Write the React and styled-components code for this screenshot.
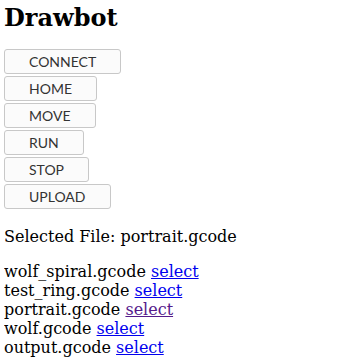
import React from 'react'
import styled, { createGlobalStyle } from 'styled-components'

const GlobalStyle = createGlobalStyle`
  body {
    margin: 4px;
    font-family: "DejaVu Serif", serif;
    font-size: 16px;
    background: #ffffff;
  }
`

const Title = styled.h1`
  font-family: "DejaVu Serif", serif;
  font-size: 24px;
  font-weight: bold;
  margin: 0 0 17px 0;
  line-height: 28px;
`

const Controls = styled.div`
  display: flex;
  flex-direction: column;
  align-items: flex-start;
  gap: 2px;
`

const Button = styled.button`
  font-family: Lato, sans-serif;
  font-size: 14px;
  color: #333;
  text-transform: uppercase;
  background: #fbfbfb;
  border: 1px solid #c8c8c8;
  border-radius: 3px;
  padding: 0 24px;
  height: 25px;
  cursor: pointer;
`

const Selected = styled.p`
  margin: 18px 0 16px 0;
  line-height: 19px;
`

const FileList = styled.div`
  line-height: 19px;
`

const FileRow = styled.div``

const SelectLink = styled.a`
  color: ${(p) => (p.$visited ? '#551a8b' : '#0000ee')};
  text-decoration: underline;
  cursor: pointer;
`

const buttons = ['Connect', 'Home', 'Move', 'Run', 'Stop', 'Upload']

const files = [
  'wolf_spiral.gcode',
  'test_ring.gcode',
  'portrait.gcode',
  'wolf.gcode',
  'output.gcode',
]

export default function App() {
  const selected = 'portrait.gcode'
  return (
    <>
      <GlobalStyle />
      <Title>Drawbot</Title>
      <Controls>
        {buttons.map((b) => (
          <Button key={b}>{b}</Button>
        ))}
      </Controls>
      <Selected>Selected File: {selected}</Selected>
      <FileList>
        {files.map((f) => (
          <FileRow key={f}>
            {f}{' '}
            <SelectLink href="#" $visited={f === selected}>
              select
            </SelectLink>
          </FileRow>
        ))}
      </FileList>
    </>
  )
}
